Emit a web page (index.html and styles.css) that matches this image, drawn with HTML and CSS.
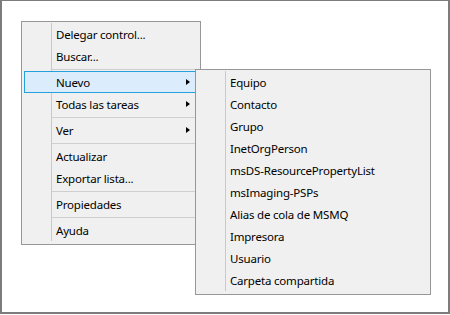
FILE: index.html
```html
<!DOCTYPE html>
<html lang="es">
<head>
<meta charset="utf-8">
<title>Menú contextual</title>
<link rel="stylesheet" href="styles.css">
</head>
<body>
<div class="screen">
  <div class="menu main-menu">
    <div class="item">Delegar control...</div>
    <div class="item">Buscar...</div>
    <div class="sep"></div>
    <div class="item active"><span class="label">Nuevo</span><span class="arrow"></span></div>
    <div class="item"><span class="label">Todas las tareas</span><span class="arrow"></span></div>
    <div class="sep"></div>
    <div class="item"><span class="label">Ver</span><span class="arrow"></span></div>
    <div class="sep"></div>
    <div class="item">Actualizar</div>
    <div class="item">Exportar lista...</div>
    <div class="sep"></div>
    <div class="item">Propiedades</div>
    <div class="sep"></div>
    <div class="item">Ayuda</div>

    <div class="menu sub-menu">
      <div class="item">Equipo</div>
      <div class="item">Contacto</div>
      <div class="item">Grupo</div>
      <div class="item">InetOrgPerson</div>
      <div class="item">msDS-ResourcePropertyList</div>
      <div class="item">msImaging-PSPs</div>
      <div class="item">Alias de cola de MSMQ</div>
      <div class="item">Impresora</div>
      <div class="item">Usuario</div>
      <div class="item">Carpeta compartida</div>
    </div>
  </div>
</div>
</body>
</html>
```
FILE: styles.css
```css
html, body {
  margin: 0;
  padding: 0;
  background: #ffffff;
}

.screen {
  position: relative;
  box-sizing: border-box;
  width: 450px;
  height: 314px;
  background: #ffffff;
  border-style: solid;
  border-color: #7c7c7c;
  border-width: 1px 2px 2px 2px;
  font-family: "Noto Sans", "Open Sans", sans-serif;
  font-size: 11.5px;
  letter-spacing: -0.2px;
  color: #000000;
}

.menu {
  position: absolute;
  box-sizing: border-box;
  display: flex;
  flex-direction: column;
  padding: 1px 2px 3px 2px;
  border: 1px solid #979797;
  background:
    linear-gradient(#c9c9c9, #c9c9c9) no-repeat 27px 0 / 1px 100% content-box,
    #f0f0f0;
}

.main-menu {
  left: 19px;
  top: 20px;
  width: 180px;
}

.sub-menu {
  left: 173px;
  top: 47px;
  width: 236px;
  z-index: 2;
}

.item {
  box-sizing: border-box;
  display: flex;
  align-items: center;
  height: 22px;
  padding-left: 31px;
  padding-top: 2px;
  border: 1px solid transparent;
  line-height: 16px;
  white-space: nowrap;
}

.item .label {
  flex: 1;
}

.item.active {
  background: #dbecfc;
  border-color: #26a0da;
}

.arrow {
  width: 0;
  height: 0;
  margin-top: -2px;
  margin-right: 7px;
  border-left: 4px solid #000000;
  border-top: 3.5px solid transparent;
  border-bottom: 3.5px solid transparent;
}

.sep {
  height: 4px;
  margin-left: 27px;
  background: linear-gradient(#cfcfcf, #cfcfcf) no-repeat 0 2px / 100% 1px;
}
```
